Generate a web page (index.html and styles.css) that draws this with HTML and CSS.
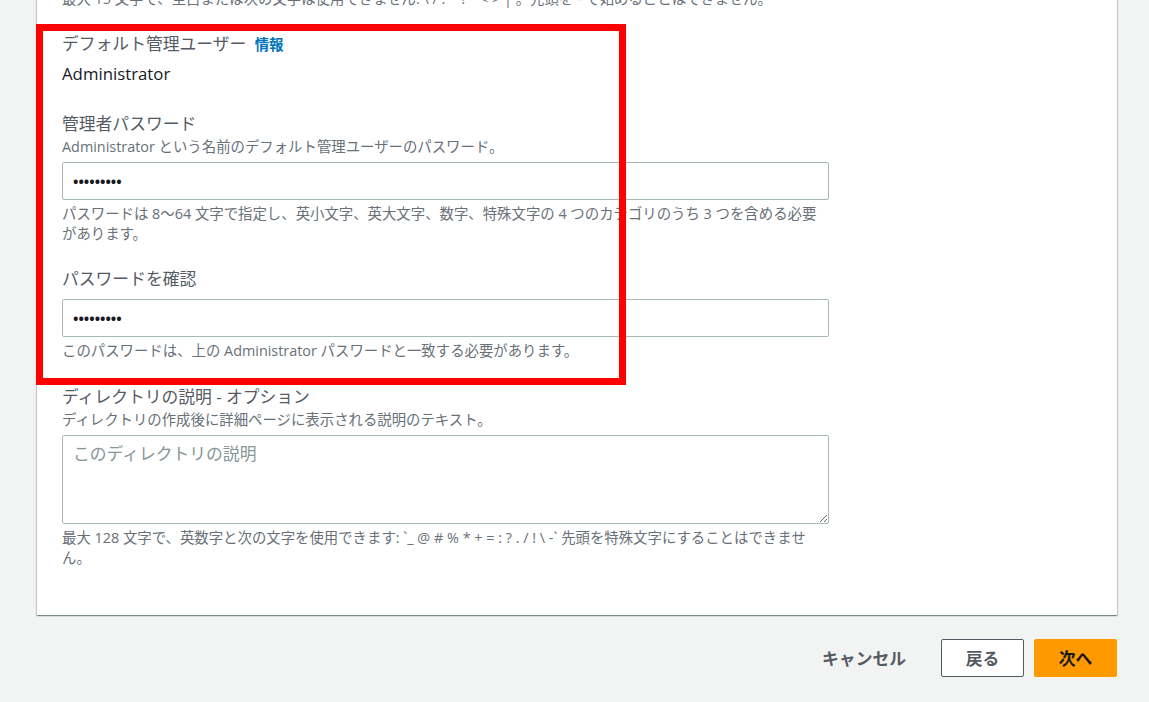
FILE: index.html
```html
<!DOCTYPE html>
<html lang="ja">
<head>
<meta charset="utf-8">
<title>ディレクトリ設定</title>
<link rel="stylesheet" href="styles.css">
</head>
<body>
<div class="page">
  <section class="card">
    <p class="hint top-hint">最大 15 文字で、空白または次の文字は使用できません: \ / : * ? " &lt; &gt; | 。先頭を - で始めることはできません。</p>

    <div class="field field-user">
      <div class="label">デフォルト管理ユーザー <a class="info" href="#">情報</a></div>
      <div class="value">Administrator</div>
    </div>

    <div class="field field-pass">
      <div class="label">管理者パスワード</div>
      <div class="desc">Administrator という名前のデフォルト管理ユーザーのパスワード。</div>
      <input class="control" type="password" value="123456789">
      <p class="hint after">パスワードは 8〜64 文字で指定し、英小文字、英大文字、数字、特殊文字の 4 つのカテゴリのうち 3 つを含める必要があります。</p>
    </div>

    <div class="field field-confirm">
      <div class="label">パスワードを確認</div>
      <input class="control control-nodesc" type="password" value="123456789">
      <p class="hint after">このパスワードは、上の Administrator パスワードと一致する必要があります。</p>
    </div>

    <div class="field field-descr">
      <div class="label">ディレクトリの説明 - オプション</div>
      <div class="desc">ディレクトリの作成後に詳細ページに表示される説明のテキスト。</div>
      <textarea class="control area" placeholder="このディレクトリの説明"></textarea>
      <p class="hint after">最大 128 文字で、英数字と次の文字を使用できます: `_ @ # % * + = : ? . / ! \ -` 先頭を特殊文字にすることはできません。</p>
    </div>
  </section>

  <div class="actions">
    <button class="btn btn-link" type="button">キャンセル</button>
    <button class="btn btn-normal" type="button">戻る</button>
    <button class="btn btn-primary" type="button">次へ</button>
  </div>

  <div class="highlight"></div>
</div>
</body>
</html>
```

FILE: styles.css
```css
* { box-sizing: border-box; }

html, body {
  margin: 0;
  padding: 0;
}

body {
  background: #f2f3f3;
  font-family: "Open Sans", "Noto Sans CJK JP", sans-serif;
  color: #16191f;
  overflow: hidden;
}

.page {
  position: relative;
  display: flow-root;
  width: 1149px;
  height: 702px;
}

.card {
  margin: -11px 0 0 37px;
  width: 1080px;
  background: #ffffff;
  padding: 0 24px 47px 25px;
  box-shadow: 0 1px 1px 0 rgba(0, 28, 36, 0.3), 1px 1px 1px 0 rgba(0, 28, 36, 0.15), -1px 1px 1px 0 rgba(0, 28, 36, 0.15);
}

.hint {
  margin: 0;
  width: 767px;
  font-size: 14.4px;
  line-height: 20px;
  color: #687078;
}

.field-user { margin-top: 22px; }
.field-pass { margin-top: 24px; }
.field-confirm { margin-top: 22px; }
.field-descr { margin-top: 23px; }

.label {
  font-size: 16.8px;
  line-height: 26px;
  color: #545b64;
}

.info {
  margin-left: 4px;
  font-size: 14.4px;
  font-weight: 700;
  color: #0073bb;
  text-decoration: none;
}

.value {
  margin-top: 3px;
  font-size: 16.8px;
  line-height: 26px;
  color: #16191f;
}

.desc {
  font-size: 14.4px;
  line-height: 20px;
  color: #687078;
}

.control {
  display: block;
  width: 767px;
  height: 38px;
  margin-top: 5px;
  padding: 0 10px;
  border: 1px solid #aab7b8;
  border-radius: 2px;
  background: #ffffff;
  font-family: "Open Sans", "Noto Sans CJK JP", sans-serif;
  font-size: 14.4px;
  font-weight: 700;
  color: #16191f;
  outline: none;
}

.control-nodesc { margin-top: 7px; }

.area {
  height: 89px;
  padding: 5px 10px;
  font-size: 16.8px;
  font-weight: 400;
  line-height: 26px;
  resize: vertical;
}

.area::placeholder {
  color: #879596;
}

.after { margin-top: 4px; }

.actions {
  display: flex;
  justify-content: flex-end;
  gap: 10px;
  width: 1117px;
  margin-top: 24px;
}

.btn {
  height: 38px;
  padding: 0 24px;
  border-radius: 2px;
  font-family: "Open Sans", "Noto Sans CJK JP", sans-serif;
  font-size: 16.8px;
  font-weight: 700;
  cursor: pointer;
}

.btn-link {
  border: 1px solid transparent;
  background: transparent;
  color: #545b64;
}

.btn-normal {
  width: 83px;
  padding: 0;
  border: 1px solid #545b64;
  background: #ffffff;
  color: #545b64;
}

.btn-primary {
  width: 83px;
  padding: 0;
  border: 1px solid #ff9900;
  background: #ff9900;
  color: #16191f;
}

.highlight {
  position: absolute;
  left: 36px;
  top: 24px;
  width: 590px;
  height: 361px;
  border: 7px solid #ff0000;
  pointer-events: none;
}
```
